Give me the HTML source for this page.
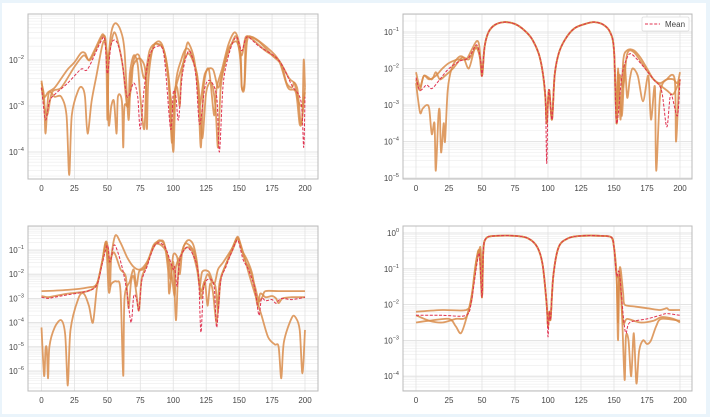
<!DOCTYPE html>
<html><head><meta charset="utf-8"><style>
html,body{margin:0;padding:0;background:#eaf4fb;}
#w{position:absolute;left:2px;top:3px;width:704px;height:411px;background:#fff;}
svg{position:absolute;left:0;top:0}
text{font-family:"Liberation Sans",sans-serif;fill:#444;}
</style></head><body><div id="w"></div>
<svg id="s" width="710" height="417" xmlns="http://www.w3.org/2000/svg"></svg>
<script>
const P=[
{bx:28,by:14,bw:290,bh:165,x0:41.5,sx:1.3175,ty:-32,sy:46,dec:[-4,-3,-2],lo:-4.65,hi:-0.95,
 c:[
 [0,-2.45,2,-2.8,5,-2.7,10,-2.6,15,-2.4,20,-2.2,25,-2.05,30,-1.85,33,-1.85,36,-2.0,40,-1.8,45,-1.5,47,-1.45,49,-1.7,50,-3.3,51,-2.0,53,-1.4,56,-1.2,60,-1.35,63,-1.8,66,-3.3,68,-2.3,72,-2.0,76,-2.0,79,-2.3,80,-3.5,81,-2.5,84,-1.8,88,-1.6,92,-1.7,96,-2.3,99,-3.8,101,-2.7,103,-2.6,105,-3.0,106,-2.4,110,-1.7,112,-1.65,116,-2.0,119,-2.8,121,-3.9,123,-2.6,127,-2.2,131,-3.2,133,-2.6,137,-2.2,142,-1.65,147,-1.4,151,-1.8,152,-2.6,154,-2.5,155,-1.6,158,-1.5,165,-1.6,175,-1.9,182,-2.1,186,-2.5,190,-2.6,192,-2.5,195,-2.9,198,-3.0,200,-2.7],
 [0,-2.5,2,-2.8,3,-3.6,5,-2.8,7,-2.7,10,-2.8,15,-2.8,19,-3.2,21,-4.5,23,-3.2,28,-2.65,31,-2.6,33,-2.8,35,-3.6,38,-2.9,42,-2.3,46,-1.7,48,-1.6,50,-2.0,51,-3.4,53,-3.0,55,-2.9,57,-3.6,58,-2.8,61,-2.9,62,-3.9,63,-3.0,66,-3.0,67,-2.3,70,-1.9,73,-2.1,75,-2.8,78,-3.5,80,-2.3,85,-1.7,88,-1.65,93,-1.8,97,-2.5,100,-4.0,102,-2.5,106,-2.0,110,-1.75,114,-1.9,119,-2.5,122,-3.7,125,-2.7,129,-2.5,132,-3.0,134,-3.9,136,-2.6,140,-2.0,145,-1.6,148,-1.5,151,-2.0,152,-2.6,154,-2.6,156,-1.6,160,-1.5,170,-1.7,180,-2.0,187,-2.6,193,-2.7,196,-3.4,198,-3.2,199,-2.0,200,-2.6],
 [0,-2.6,4,-3.2,8,-2.7,15,-2.6,25,-2.15,32,-1.9,37,-2.0,45,-1.55,48,-1.5,50,-2.0,52,-1.75,55,-1.4,58,-1.6,62,-2.2,65,-3.0,68,-2.6,70,-2.0,74,-1.9,78,-2.4,82,-1.8,87,-1.65,93,-1.8,98,-2.8,100,-3.1,102,-2.6,106,-2.2,110,-1.9,113,-1.9,118,-2.3,120,-3.0,124,-2.3,130,-2.2,134,-2.6,137,-2.3,142,-1.75,148,-1.6,152,-1.9,155,-1.5,160,-1.55,170,-1.8,180,-2.0,188,-2.4,194,-2.6,197,-3.4,200,-2.6]],
 m:[0,-2.6,3,-3.3,6,-2.9,10,-2.75,20,-2.5,30,-2.2,35,-2.2,45,-1.6,48,-1.55,50,-2.3,53,-1.65,57,-1.6,61,-2.0,65,-2.8,70,-2.5,73,-2.8,75,-3.5,78,-2.6,82,-1.9,88,-1.7,93,-1.9,98,-3.5,100,-2.7,102,-2.8,104,-3.3,107,-2.3,112,-1.8,117,-2.3,120,-3.4,124,-2.6,128,-2.45,133,-2.8,135,-4.0,138,-2.5,143,-1.8,148,-1.5,152,-1.8,156,-1.5,165,-1.7,180,-2.0,190,-2.55,197,-2.9,199,-3.9,200,-2.8]},
{bx:403,by:14,bw:289,bh:165,x0:416,sx:1.32,ty:-4.5,sy:36.5,dec:[-5,-4,-3,-2,-1],lo:-5.05,hi:-0.6,legend:1},
{bx:28,by:226,bw:290,bh:165,x0:41.5,sx:1.3175,ty:225.8,sy:24.2,dec:[-6,-5,-4,-3,-2,-1],lo:-6.8,hi:0},
{bx:403,by:226,bw:289,bh:165,x0:416,sx:1.32,ty:233,sy:35.8,dec:[-4,-3,-2,-1,0],lo:-4.4,hi:0.2}
];
const arch2=[50,-2.2,52,-1.4,55,-1.0,60,-0.8,67,-0.73,75,-0.78,82,-0.95,88,-1.2,93,-1.6,96,-2.1,98,-2.8,99,-3.5,100,-2.9,101,-2.6,103,-3.4,105,-2.2,108,-1.6,113,-1.2,120,-0.9,128,-0.78,135,-0.73,142,-0.8,147,-1.0,150,-1.5,152,-3.5];
P[1].c=[
 [0,-2.1,3,-2.5,6,-2.2,10,-2.3,15,-2.2,20,-2.0,25,-1.85,32,-1.75,38,-1.75,42,-1.5,46,-1.25,48,-1.4,...arch2,153,-2.0,155,-3.4,157,-1.8,160,-1.5,165,-1.5,170,-1.7,175,-2.0,180,-2.3,185,-2.4,190,-2.3,195,-2.3,198,-2.4,200,-2.1],
 [0,-2.4,3,-3.2,5,-3.1,8,-3.0,10,-3.1,12,-3.8,14,-3.5,15,-4.8,17,-3.3,18,-3.2,19,-4.3,21,-3.5,22,-4.0,24,-2.6,27,-2.0,32,-1.7,36,-1.7,40,-2.0,44,-1.5,46,-1.4,49,-1.8,...arch2,153,-2.1,156,-3.3,158,-1.9,160,-2.8,162,-2.3,164,-2.0,168,-2.2,172,-2.9,176,-2.2,178,-3.4,181,-2.5,182,-4.8,185,-2.7,190,-2.3,196,-2.3,197,-4.0,199,-2.6,200,-2.3],
 [0,-2.3,3,-2.6,6,-2.2,12,-2.3,15,-2.1,18,-2.3,22,-2.2,28,-2.0,35,-1.7,40,-1.75,45,-1.45,48,-1.6,...arch2,154,-2.2,157,-2.5,160,-1.6,165,-1.55,172,-1.9,180,-2.3,190,-2.6,195,-2.7,200,-2.3]];
P[1].m=[0,-2.25,3,-2.6,8,-2.45,12,-2.55,18,-2.3,25,-2.0,33,-1.8,40,-1.7,46,-1.35,49,-1.8,...arch2.map((v,i)=>i==23?-4.6:v),156,-2.2,160,-1.7,163,-1.6,170,-1.85,180,-2.3,186,-2.6,190,-3.6,193,-2.7,198,-3.3,200,-2.3];
P[2].c=[
 [0,-2.7,20,-2.65,35,-2.55,42,-2.4,46,-1.5,49,-0.65,51,-1.2,52,-2.5,53,-1.3,56,-0.4,60,-0.7,65,-1.3,70,-1.7,75,-1.8,80,-1.5,85,-0.9,89,-0.6,93,-0.75,96,-1.4,98,-2.2,100,-1.2,103,-1.3,105,-2.0,107,-1.0,111,-0.6,115,-0.75,118,-1.5,120,-2.5,122,-1.9,127,-1.9,131,-2.4,134,-1.8,138,-1.5,145,-0.9,149,-0.45,152,-1.0,155,-1.5,158,-1.8,162,-2.5,165,-3.1,168,-2.9,170,-2.7,180,-2.7,200,-2.7],
 [0,-4.2,2,-6.2,3,-5.1,4,-5.1,5,-6.3,6,-5.0,10,-4.2,15,-3.9,18,-4.5,20,-6.6,22,-4.3,28,-3.0,32,-2.8,36,-3.3,39,-4.0,42,-2.6,46,-1.5,49,-0.7,51,-2.7,53,-2.4,57,-2.3,60,-2.7,62,-6.2,63,-3.0,67,-2.3,70,-1.8,72,-2.5,74,-1.9,77,-1.8,80,-1.6,85,-0.8,89,-0.65,93,-0.7,96,-1.8,97,-2.8,100,-1.5,102,-3.9,104,-1.8,108,-0.85,111,-0.75,116,-1.1,119,-2.0,121,-3.0,123,-2.5,126,-2.0,129,-2.3,132,-2.5,134,-3.5,136,-2.2,140,-1.6,145,-0.9,149,-0.5,153,-1.1,157,-1.9,163,-3.0,167,-3.7,172,-4.6,177,-4.9,180,-5.0,182,-6.3,184,-4.8,190,-3.8,193,-3.8,196,-4.3,198,-6.1,200,-4.3],
 [0,-2.9,5,-2.95,10,-2.9,20,-2.8,35,-2.7,42,-2.4,46,-1.5,49,-0.75,51,-1.5,55,-1.1,60,-1.8,64,-2.1,66,-3.4,68,-2.3,70,-2.1,72,-2.8,74,-3.5,76,-2.2,80,-1.6,85,-0.85,89,-0.75,94,-1.0,98,-1.7,101,-2.9,102,-1.7,106,-1.2,110,-0.9,114,-1.0,118,-1.8,121,-2.7,124,-2.3,126,-3.3,128,-2.4,130,-2.7,133,-4.0,135,-2.4,140,-1.6,145,-1.0,149,-0.55,152,-1.0,156,-1.4,160,-2.0,164,-3.3,166,-2.8,170,-2.95,175,-2.9,178,-3.0,180,-3.2,183,-3.0,190,-2.95,200,-2.95]];
P[2].m=[0,-2.95,5,-3.0,10,-2.95,20,-2.85,35,-2.7,42,-2.45,46,-1.6,50,-0.8,52,-1.5,55,-0.8,58,-1.1,62,-1.9,65,-2.8,68,-4.0,70,-2.9,72,-3.0,74,-3.5,76,-2.3,80,-1.7,85,-0.9,89,-0.7,94,-0.9,98,-1.5,100,-1.8,101,-1.7,103,-2.5,105,-1.4,110,-0.9,115,-1.2,119,-2.0,121,-4.4,123,-2.6,127,-2.2,131,-2.5,133,-4.2,136,-2.3,140,-1.7,145,-1.0,149,-0.6,153,-1.4,157,-1.8,162,-2.6,165,-3.7,167,-3.0,170,-3.1,175,-3.05,178,-3.2,182,-3.0,190,-3.05,200,-2.95];
const arch4=[50,-1.8,51,-0.5,53,-0.15,60,-0.08,75,-0.08,85,-0.15,92,-0.4,96,-0.9,99,-2.0,100,-2.6,101,-2.2,102,-2.4,104,-1.2,108,-0.4,115,-0.15,125,-0.08,140,-0.08,148,-0.12,150,-0.4,152,-1.2];
P[3].c=[
 [0,-2.2,20,-2.15,38,-2.15,42,-1.9,44,-1.2,46,-0.7,48,-0.45,49,-0.5,...arch4,153,-3.0,154,-1.2,155,-1.0,157,-1.7,158,-2.0,165,-2.05,175,-2.1,185,-2.15,190,-2.1,192,-2.15,200,-2.15],
 [0,-2.5,10,-2.45,25,-2.4,30,-2.6,34,-2.8,38,-2.4,42,-1.8,46,-0.8,48,-0.5,49,-0.6,...arch4,153,-2.5,154,-1.1,156,-2.2,158,-4.1,159,-2.9,161,-3.0,163,-4.0,165,-2.8,167,-4.2,169,-3.3,172,-3.0,175,-3.1,178,-3.0,182,-2.6,186,-2.4,200,-2.45],
 [0,-2.3,10,-2.45,20,-2.5,30,-2.4,38,-2.35,42,-1.8,46,-0.7,48,-0.55,...arch4,154,-1.2,155,-1.5,157,-2.5,160,-2.4,170,-2.5,180,-2.45,186,-2.35,195,-2.4,200,-2.5]];
P[3].m=[0,-2.3,20,-2.3,38,-2.3,42,-1.9,46,-0.9,48,-0.6,...arch4.map((v,i)=>i==19?-2.9:v),154,-1.1,157,-2.3,159,-2.8,162,-2.5,175,-2.4,185,-2.3,190,-2.25,200,-2.3];

let h='';
P.forEach((p,k)=>{
 const X=v=>p.x0+p.sx*v, Y=L=>p.ty-p.sy*L;
 h+=`<clipPath id="c${k}"><rect x="${p.bx}" y="${p.by}" width="${p.bw}" height="${p.bh}"/></clipPath>`;
 h+=`<g clip-path="url(#c${k})">`;
 for(let d=Math.floor(p.lo);d<=Math.ceil(p.hi);d++){
  for(let m=2;m<10;m++){const y=Y(d+Math.log10(m));h+=`<line x1="${p.bx}" x2="${p.bx+p.bw}" y1="${y}" y2="${y}" stroke="#ececec" stroke-width="0.6"/>`;}
  const y=Y(d);h+=`<line x1="${p.bx}" x2="${p.bx+p.bw}" y1="${y}" y2="${y}" stroke="#dcdcdc" stroke-width="0.8"/>`;
 }
 for(let v=0;v<=200;v+=25){const x=X(v);h+=`<line x1="${x}" x2="${x}" y1="${p.by}" y2="${p.by+p.bh}" stroke="#e2e2e2" stroke-width="0.8"/>`;}
 const pts=a=>{const q=[];for(let i=0;i<a.length;i+=2)q.push([X(a[i]),Y(a[i+1])]);
  let s='M'+q[0][0].toFixed(1)+','+q[0][1].toFixed(1);
  for(let i=0;i<q.length-1;i++){const p0=q[Math.max(0,i-1)],p1=q[i],p2=q[i+1],p3=q[Math.min(q.length-1,i+2)];
   const t=0.15;const c1=[p1[0]+(p2[0]-p0[0])*t,p1[1]+(p2[1]-p0[1])*t],c2=[p2[0]-(p3[0]-p1[0])*t,p2[1]-(p3[1]-p1[1])*t];
   s+=` C${c1[0].toFixed(1)},${c1[1].toFixed(1)} ${c2[0].toFixed(1)},${c2[1].toFixed(1)} ${p2[0].toFixed(1)},${p2[1].toFixed(1)}`;}
  return s;};
 p.c.forEach(a=>h+=`<path d="${pts(a)}" fill="none" stroke="#d98c4a" stroke-opacity="0.85" stroke-width="1.8" stroke-linejoin="round"/>`);
 h+=`<path d="${pts(p.m)}" fill="none" stroke="#e0304f" stroke-width="1" stroke-dasharray="3,1.6"/>`;
 h+='</g>';
 h+=`<rect x="${p.bx}" y="${p.by}" width="${p.bw}" height="${p.bh}" fill="none" stroke="#bbb" stroke-width="1"/>`;
 for(let v=0;v<=200;v+=25){const x=X(v);h+=`<text x="${x}" y="${p.by+p.bh+12}" font-size="8" text-anchor="middle">${v}</text>`;}
 p.dec.forEach(d=>{const y=Y(d);h+=`<text x="${p.bx-4}" y="${y+3}" font-size="8" text-anchor="end">10<tspan font-size="5.5" dy="-4">${d<0?'\u2212'+(-d):d}</tspan></text>`;});
 if(p.legend){h+=`<rect x="642" y="17" width="47" height="14" fill="#fff" stroke="#ddd" stroke-width="0.8" rx="1.5"/><line x1="645" x2="660" y1="24" y2="24" stroke="#e0304f" stroke-dasharray="3,1.6"/><text x="665" y="27" font-size="8">Mean</text>`;}
});
document.getElementById('s').innerHTML=h;
</script></body></html>
